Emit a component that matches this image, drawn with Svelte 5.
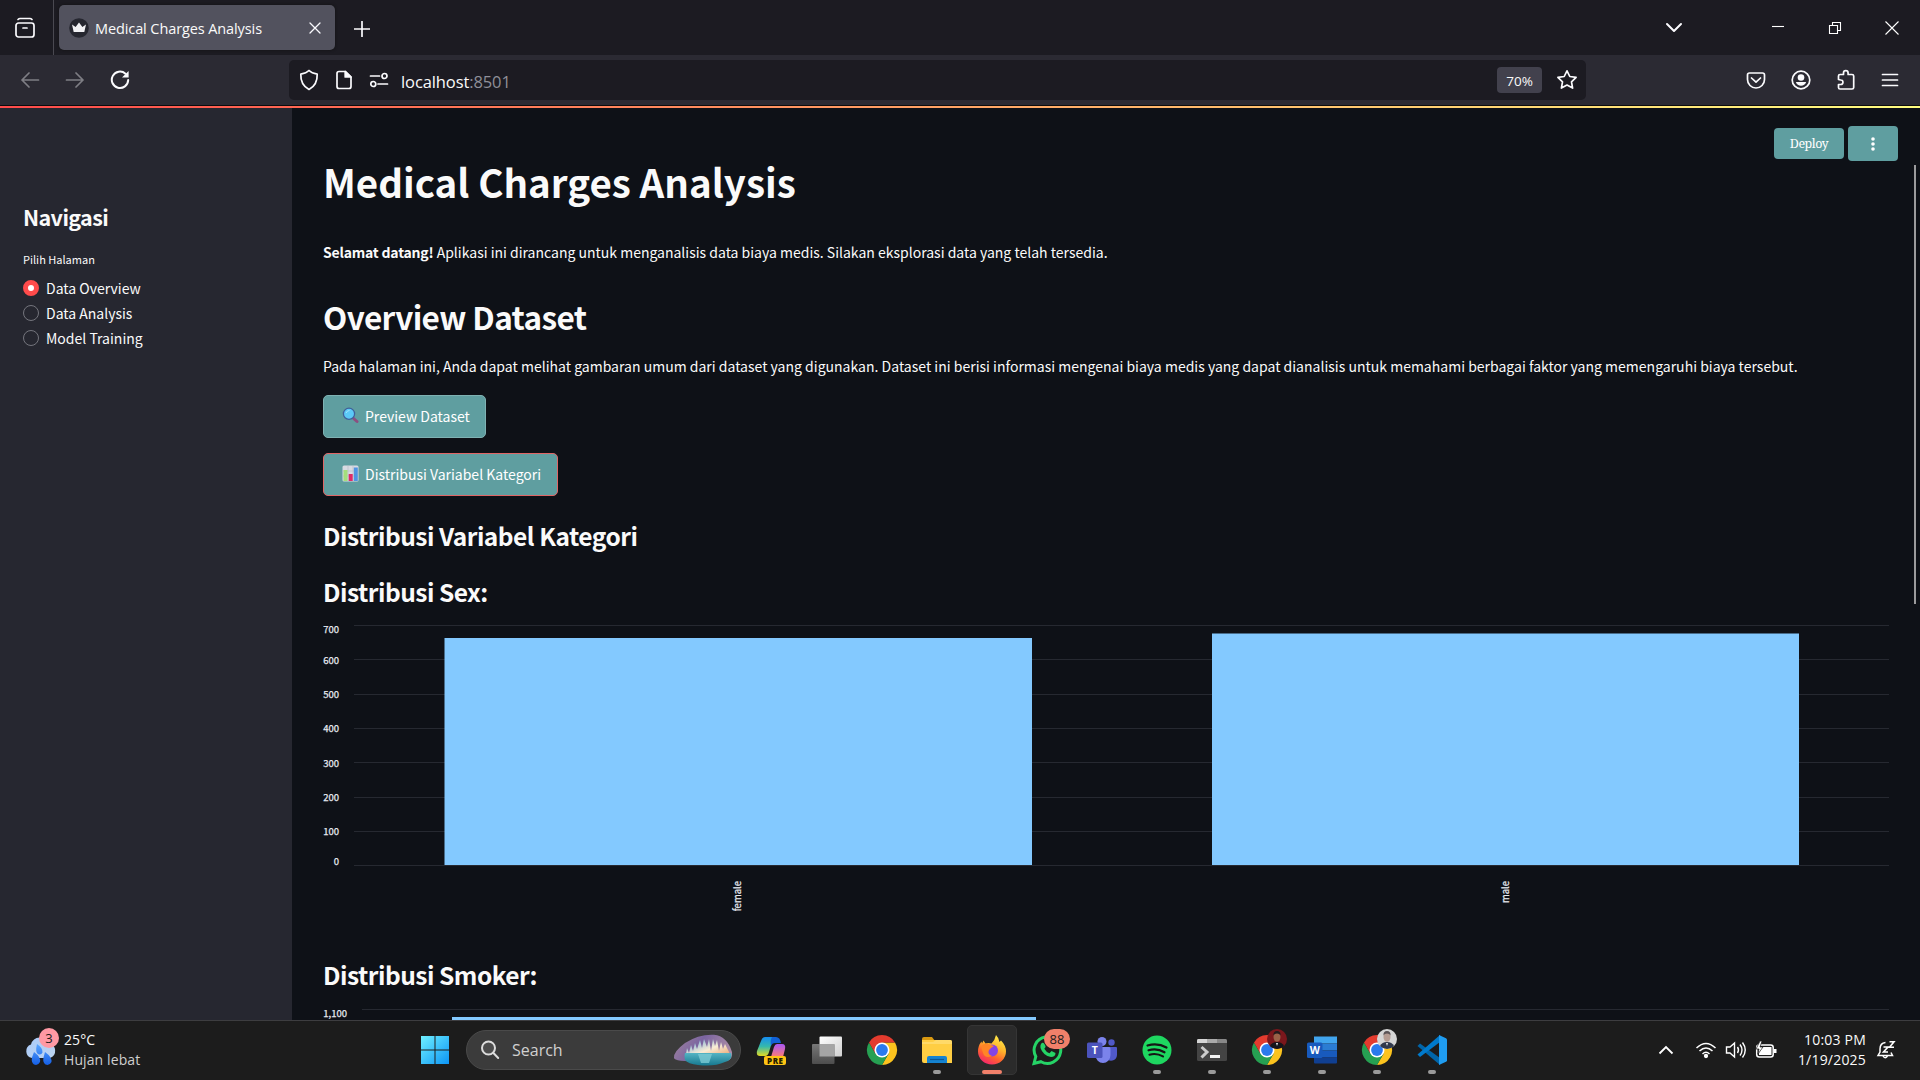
<script>
  const pages = ['Data Overview', 'Data Analysis', 'Model Training'];
  let current = $state('Data Overview');
  const ticks = [700, 600, 500, 400, 300, 200, 100, 0];
  const apps = [
    { name: 'copilot' }, { name: 'taskview' }, { name: 'chrome' },
    { name: 'files', open: true }, { name: 'firefox', active: true },
    { name: 'whatsapp', badge: 88 }, { name: 'teams' },
    { name: 'spotify', open: true }, { name: 'terminal', open: true },
    { name: 'chrome', open: true, avatar: 'red' }, { name: 'word', open: true },
    { name: 'chrome', open: true, avatar: 'gray' }, { name: 'code', open: true }
  ];
</script>

<div class="screen">
  <header class="tabs">
    <div class="view">
      <svg width="22" height="22" viewBox="0 0 22 22" class="line"><path d="M4 2.500Q5 1.500 6 1.500H16Q17 1.500 18 2.500" /><rect x="2" y="6" width="18" height="14" rx="2.500" /><path d="M9 11h4" /></svg>
    </div>
    <div class="tab">
      <svg width="20" height="20" viewBox="0 0 20 20"><circle cx="10" cy="10" r="9.800" fill="#262730" /><path d="M3 6.500l3.600 2.600L10 4.600l3.400 4.500L17 6.500 15.300 14H4.700z" fill="#f2f2f5" /></svg>
      <span class="tab-title">Medical Charges Analysis</span>
      <svg class="line close" width="12" height="12" viewBox="0 0 12 12"><path d="M1 1l10 10M11 1L1 11" /></svg>
    </div>
    <svg class="line plus" width="16" height="16" viewBox="0 0 16 16"><path d="M8 .5v15M.5 8h15" /></svg>
    <div class="window">
      <svg class="line thick chev" width="18" height="12" viewBox="0 0 18 12"><path d="M2 2l7 7 7-7" /></svg>
      <svg class="thin min" width="12" height="14" viewBox="0 0 12 14"><path d="M0 5.500h12" /></svg>
      <svg class="thin restore" width="14" height="14" viewBox="0 0 14 14"><path d="M1.500 4.500h8v8h-8zM4.500 4.500v-3h8v8h-3" /></svg>
      <svg class="thin shut" width="14" height="14" viewBox="0 0 14 14"><path d="M.5.5l13 13M13.500.5l-13 13" /></svg>
    </div>
  </header>

  <div class="toolbar">
    <div class="nav">
      <svg class="line dim" width="20" height="20" viewBox="0 0 20 20"><path d="M18.500 10H2M9 3l-7 7 7 7" /></svg>
      <svg class="line dim" width="20" height="20" viewBox="0 0 20 20"><path d="M1.500 10H18M11 3l7 7-7 7" /></svg>
      <svg class="line thick" width="20" height="20" viewBox="0 0 20 20"><path d="M15.500 3.700A8.200 8.200 0 1 0 18.200 10" /><path d="M18.600 1v6.500H12z" fill="#fbfbfe" stroke="none" /></svg>
    </div>
    <div class="url">
      <svg class="line" width="20" height="22" viewBox="0 0 20 22"><path d="M10 1.500C8 3.500 5 4.600 1.800 5.200 1.500 13 4.500 17.500 10 20.500 15.500 17.500 18.500 13 18.200 5.200 15 4.600 12 3.500 10 1.500z" /></svg>
      <svg class="line doc" width="18" height="20" viewBox="0 0 18 20"><path d="M4 1.500h6.500L16 7v9.500q0 2-2 2H4q-2 0-2-2v-13q0-2 2-2z" /><path d="M10.200 1.500V7H16z" fill="#fbfbfe" /></svg>
      <svg class="line perm" width="20" height="16" viewBox="0 0 20 16"><path d="M1.500 4h9M9 12h9.500" /><circle cx="15.500" cy="4" r="2.500" /><circle cx="4.300" cy="12" r="2.500" /></svg>
      <span class="host">localhost<i>:8501</i></span>
      <span class="zoom">70%</span>
      <svg class="line star" width="22" height="22" viewBox="0 0 22 22"><path d="M11 1.800l2.800 5.700 6.300.9-4.600 4.400 1.100 6.300L11 16.100l-5.600 3 1.100-6.300L1.900 8.400l6.300-.9z" /></svg>
    </div>
    <div class="tools">
      <svg class="line" width="20" height="20" viewBox="0 0 20 20"><path d="M3.500 3h13q2 0 2 2v4.500a8.500 8.500 0 0 1-17 0V5q0-2 2-2zM5.500 8l4.500 4.200L14.500 8" /></svg>
      <svg class="line" width="20" height="20" viewBox="0 0 20 20"><circle cx="10" cy="10" r="8.800" /><circle cx="10" cy="7.500" r="3.300" fill="#fbfbfe" stroke="none" /><path d="M4.800 12h10.400q-1.500 3.800-5.200 3.800T4.800 12z" fill="#fbfbfe" stroke="none" /></svg>
      <svg class="line" width="20" height="22" viewBox="0 0 20 22"><path d="M2.500 10.500V7q0-1.500 1.500-1.500h3.500V4a2.300 2.300 0 0 1 4.600 0v1.500H16q1.700 0 1.700 1.500v11.500q0 1.500-1.700 1.500H4q-1.500 0-1.500-1.500v-3h2.200a2.200 2.200 0 0 0 0-4.500z" /></svg>
      <svg class="line" width="18" height="20" viewBox="0 0 18 20"><path d="M1.500 4.500h15M1.500 10h15M1.500 15.500h15" /></svg>
    </div>
  </div>
  <div class="decoration"></div>

  <div class="app">
    <aside>
      <h3>Navigasi</h3>
      <p class="caption">Pilih Halaman</p>
      {#each pages as page}
        <button class="radio" onclick={() => (current = page)}>
          <span class="dot" class:on={current === page}></span><span>{page}</span>
        </button>
      {/each}
    </aside>
    <main>
      <div class="actions"><button class="deploy">Deploy</button><button class="dots" aria-label="Menu"><svg width="4" height="14" viewBox="0 0 4 14" fill="#fff"><circle cx="2" cy="2" r="1.800" /><circle cx="2" cy="7" r="1.800" /><circle cx="2" cy="12" r="1.800" /></svg></button></div>
      <h1>Medical Charges Analysis</h1>
      <p class="welcome"><b>Selamat datang!</b> Aplikasi ini dirancang untuk menganalisis data biaya medis. Silakan eksplorasi data yang telah tersedia.</p>
      <h2>Overview Dataset</h2>
      <p class="intro">Pada halaman ini, Anda dapat melihat gambaran umum dari dataset yang digunakan. Dataset ini berisi informasi mengenai biaya medis yang dapat dianalisis untuk memahami berbagai faktor yang memengaruhi biaya tersebut.</p>
      <button class="act preview">
        <svg width="17" height="17" viewBox="0 0 17 17"><path d="M10.500 10.500l4.500 4" stroke="#8c4f80" stroke-width="3" stroke-linecap="round" /><circle cx="7" cy="6.800" r="5.600" fill="#5cc9f7" stroke="#40609a" stroke-width="1.300" /><path d="M4 6q1-2.500 3.500-2.500" stroke="#a4e6ff" fill="none" /></svg>
        Preview Dataset
      </button>
      <button class="act selected">
        <svg width="17" height="17" viewBox="0 0 17 17"><rect x=".5" y=".5" width="16" height="16" rx="1.500" fill="#d8dbe2" /><path d="M.5 6h16M.5 11h16M6 .5v16M11 .5v16" stroke="#b7bdc8" stroke-width=".6" /><rect x="1.500" y="5" width="4" height="11" fill="#a3df7c" /><rect x="6.700" y="9" width="4" height="7" fill="#df2b68" /><rect x="11.800" y="2.500" width="4" height="13.500" fill="#4f94e2" /></svg>
        Distribusi Variabel Kategori
      </button>
      <h4>Distribusi Variabel Kategori</h4>
      <h4 class="sex">Distribusi Sex:</h4>
      <svg class="chart" width="1570" height="300" viewBox="320 620 1570 300">
        {#each ticks as t, i}
          <path class="grid" d="M354 {625.5 + Math.round(i * 34.300)}H1889" />
          <text class="tick" x="339" y={i === 0 ? 632.500 : i === 7 ? 864.500 : 629.500 + i * 34.250} text-anchor="end">{t}</text>
        {/each}
        <rect x="444.500" y="638" width="587.500" height="227" />
        <rect x="1212" y="633.500" width="587" height="231.500" />
        <text class="cat" transform="translate(740.500 881) rotate(-90)" text-anchor="end">female</text>
        <text class="cat" transform="translate(1508.500 881) rotate(-90)" text-anchor="end">male</text>
      </svg>
      <h4 class="smoker">Distribusi Smoker:</h4>
      <svg class="chart next" width="1570" height="20" viewBox="320 1000 1570 20">
        <path class="grid" d="M362 1009.500H1889" /><text class="tick" x="347" y="1016.500" text-anchor="end">1,100</text>
        <rect x="452" y="1017" width="584" height="3" />
      </svg>
      <div class="scroll"></div>
    </main>
  </div>

  <footer>
    <div class="weather">
      <svg width="34" height="38" viewBox="0 0 34 38">
        <defs><linearGradient id="cloud" x2="1" y2="1"><stop stop-color="#a9cbfa" /><stop offset="1" stop-color="#bdd4ef" /></linearGradient><linearGradient id="drop" x2="0" y2="1"><stop stop-color="#5aa6ff" /><stop offset="1" stop-color="#155fe6" /></linearGradient></defs>
        <path d="M8 27a7 7 0 0 1-1-13.500 9.500 9.500 0 0 1 18-1A7.500 7.500 0 0 1 26 27z" fill="url(#cloud)" />
        <path d="M13 13q6 4 5.500 8.500-1.500 3-4.500 1.500-3-2-1-10zM10 21q7 5 6 10-2 4-6 2.500-3-2-2-7zM21 21q7 5 6.500 10-2 4-6 2.500-3-2-2-7z" fill="url(#drop)" />
      </svg>
      <span class="alert">3</span>
      <div class="temp"><span>25°C</span><span class="muted">Hujan lebat</span></div>
    </div>
    <svg class="start" width="30" height="30" viewBox="0 0 30 30"><defs><linearGradient id="win" x2="1" y2="1"><stop stop-color="#6ff0ff" /><stop offset="1" stop-color="#0c95f5" /></linearGradient></defs><path d="M1 1h13.500v13.500H1zM15.500 1H29v13.500H15.500zM1 15.500h13.500V29H1zM15.500 15.500H29V29H15.500z" fill="url(#win)" /></svg>
    <div class="search">
      <svg width="20" height="20" viewBox="0 0 20 20" fill="#4c4c4c" stroke="#dcdcdc" stroke-width="2" stroke-linecap="round"><circle cx="8.500" cy="8" r="6.500" /><path d="M13.200 12.800l5 5.200" /></svg>
      <span>Search</span>
      <svg class="cave" width="60" height="32" viewBox="0 0 60 32">
        <defs><linearGradient id="cv" x2="1" y2=".3"><stop stop-color="#a3869f" /><stop offset=".5" stop-color="#7a64a0" /><stop offset="1" stop-color="#a98aa5" /></linearGradient><linearGradient id="sky" x2="1" y2="1"><stop stop-color="#5fa0d8" /><stop offset=".55" stop-color="#f8ecd5" /><stop offset="1" stop-color="#e89a61" /></linearGradient><linearGradient id="sea" x2="0" y2="1"><stop stop-color="#54b4c4" /><stop offset="1" stop-color="#16788f" /></linearGradient></defs>
        <path d="M1 24Q0 18 12 9 26 0 41 .8 54 2 59 18 60 25 54 27 1 29 1 24z" fill="url(#cv)" />
        <path d="M13 20l1-6 2 5 2-8 2 6 2-8 2 6 3-9 2 8 2-9 3 8 2-8 2 12 2-12 2 7 2-6 2 11 2-9 2 7 2-5 4 8 2 5H12z" fill="url(#sky)" />
        <path d="M12 19h46q2 7-6 9-11 5-27 3-10-1-13-5-1-4 0-7z" fill="url(#sea)" />
        <path d="M25 20h14l-3 9h-8z" fill="#7ccbd5" opacity=".8" />
      </svg>
    </div>
    <div class="apps">
      {#each apps as app}
        <div class="cell" class:active={app.active}>
          <svg width="32" height="32" viewBox="0 0 32 32">
            {#if app.name === 'copilot'}
              <defs><linearGradient id="cpa" x2="0" y2="1"><stop stop-color="#168df0" /><stop offset=".5" stop-color="#35b9ac" /><stop offset="1" stop-color="#e5dc20" /></linearGradient><linearGradient id="cpb" x2="0" y2="1"><stop stop-color="#a957f7" /><stop offset="1" stop-color="#ff7d70" /></linearGradient></defs>
              <path d="M9 3h11q-3 1-4 5l-3 10q-1 4-4 4H4q-4 0-3-5L5 7q1-4 4-4z" fill="url(#cpa)" /><path d="M16 3h4q4 0 5 6h-6q-3 0-4 3-1-6 1-9z" fill="#1261d6" /><path d="M21 10h5q4 0 3 5l-2 8H15l3-10q1-3 3-3z" fill="url(#cpb)" />
              <rect x="8" y="22" width="22" height="9" rx="2" fill="#ffc414" /><text x="19.300" y="29.500" class="pre">PRE</text>
            {:else if app.name === 'taskview'}
              <defs><linearGradient id="tva" x2="1" y2="1"><stop stop-color="#fff" /><stop offset="1" stop-color="#d0d0d0" /></linearGradient><linearGradient id="tvb" x2="0" y2="1"><stop stop-color="#777" /><stop offset="1" stop-color="#4d4d4d" /></linearGradient></defs>
              <rect x="8.500" y="2.500" width="22.500" height="20" rx="1" fill="url(#tva)" /><rect x="1" y="10" width="22.500" height="20" rx="1" fill="url(#tvb)" /><path d="M8.500 10h15v12.500h-15z" fill="#a5a5a5" />
            {:else if app.name === 'chrome'}
              <path d="M16 8.500h13A15 15 0 0 1 16 31l6.500-11.300z" fill="#fcc31e" /><path d="M3 8.500A15 15 0 0 0 16 31l6.500-11.300L9.500 19.700z" fill="#26a052" /><path d="M3 8.500a15 15 0 0 1 26 0H16L9.500 19.700z" fill="#e33b2e" /><circle cx="16" cy="16" r="7.500" fill="#fff" /><circle cx="16" cy="16" r="5.900" fill="#2a7aed" />
            {:else if app.name === 'files'}
              <path d="M1 5q0-2 2-2h8l3 4H1z" fill="#d99911" /><path d="M1 6h28q2 0 2 2v21H3q-2 0-2-2z" fill="#ffce43" /><path d="M1 8h11l3-2h14q2 0 2 2v2H1z" fill="#ffda69" /><path d="M6 29v-5q0-2 2-2h16q2 0 2 2v5z" fill="#1583d1" /><path d="M9 25.500h14" stroke="#0c5795" stroke-width="1.200" />
            {:else if app.name === 'firefox'}
              <defs><linearGradient id="ff" x1=".8" y1="0" x2=".3" y2="1"><stop stop-color="#fff24d" /><stop offset=".4" stop-color="#ffb52b" /><stop offset=".7" stop-color="#ff632d" /><stop offset="1" stop-color="#f3256f" /></linearGradient></defs>
              <path d="M20 1q3 3 3.500 7l1.500-1.500q5 5 5 11a14 13 0 0 1-28 0q0-6 3.500-10l.5 2 1.500-3 2 3q3-1 6 0Q19 6 20 1z" fill="url(#ff)" /><circle cx="16" cy="16.500" r="6" fill="#8444e5" /><path d="M6 11q5-3 9 0l3 1-3 2-2 2q-2 4 3 6-7 3-9-3-2-4-1-8z" fill="#ff8526" />
            {:else if app.name === 'whatsapp'}
              <path d="M3 29.500l1.800-7A13.300 13.300 0 1 1 10 27.700z" fill="none" stroke="#25d366" stroke-width="3" /><path d="M10 10q2-3 4 1l.6 1.500q0 1-1.300 2.200 2 3.500 5.200 4.500l2-2.200 4 2q0 4-4.500 4Q12 21.500 9.500 14 9 11.500 10 10z" fill="#25d366" />
            {:else if app.name === 'teams'}
              <circle cx="16" cy="7.500" r="4.500" fill="#7b83eb" /><circle cx="25.500" cy="8.500" r="3.200" fill="#5059c9" /><path d="M21 13h9q1 0 1 1v7a6 6 0 0 1-9 5z" fill="#5059c9" /><path d="M10 13h13q1.500 0 1.500 1.500V21a7.500 8 0 0 1-15 0z" fill="#7b83eb" /><rect x="1" y="8.500" width="15.500" height="15.500" rx="1.500" fill="#4b53bc" /><text x="8.800" y="20" class="letter">T</text>
            {:else if app.name === 'spotify'}
              <circle cx="16" cy="16" r="14.500" fill="#1ed760" /><path d="M6.500 11.500q10-3 19 2M7.500 16.300q8.500-2.500 16 2M8.500 20.700q7-2 13.500 1.700" fill="none" stroke="#151515" stroke-width="2.200" stroke-linecap="round" />
            {:else if app.name === 'terminal'}
              <rect x="1" y="5" width="30" height="22" rx="1.500" fill="#444" /><path d="M2.500 5h27q1.500 0 1.500 1.500V9H1V6.500Q1 5 2.500 5z" fill="#888" /><path d="M2.500 5H11v4H1V6.500Q1 5 2.500 5z" fill="#d5d5d5" /><path d="M11 5h10v4H11z" fill="#aaa" /><path d="M5.500 13l5.500 5-5.500 5.500" fill="none" stroke="#ccc" stroke-width="3" /><path d="M14 22.500h10" stroke="#f4f4f4" stroke-width="3" />
            {:else if app.name === 'word'}
              <path d="M8 2.500h23v7H8z" fill="#41a5ee" /><path d="M8 9.500h23v7H8z" fill="#2b7cd3" /><path d="M8 16.500h23v7H8z" fill="#185abd" /><path d="M8 23.500h23v5q0 1-1 1H9q-1 0-1-1z" fill="#103f91" /><rect x="1" y="8.500" width="15.500" height="15.500" rx="1.500" fill="#185abd" /><text x="8.800" y="20" class="letter">W</text>
            {:else}
              <path d="M1.500 12L4 9.500 24 24v7z" fill="#0065a9" /><path d="M1.500 20.500L4 23 24 8V1z" fill="#007acc" /><path d="M23 1l7 3.200q1 .5 1 1.500v20.600q0 1-1 1.500L23 31z" fill="#1f9cf0" />
            {/if}
          </svg>
          {#if app.avatar}
            <svg class="avatar" width="20" height="20" viewBox="0 0 20 20">
              <circle cx="10" cy="10" r="10" fill={app.avatar === 'red' ? '#7b171c' : '#d5d5d5'} /><path d="M3 17q2-4 7-4t7 4q-3 3-7 3t-7-3z" fill={app.avatar === 'red' ? '#15151c' : '#30394c'} /><ellipse cx="10" cy="8" rx="3.500" ry="4.800" fill={app.avatar === 'red' ? '#9a6248' : '#b59c92'} /><path d="M6.500 6.500q-.5-4.500 3.500-4.500t3.500 4.500q-1-2-3.500-2T6.500 6.500z" fill={app.avatar === 'red' ? '#241b1c' : '#5a5355'} /><path d="M9 14l1 3 1-3z" fill="#eee" />
            </svg>
          {/if}
          {#if app.badge}<span class="badge">{app.badge}</span>{/if}
          {#if app.open || app.active}<span class="run"></span>{/if}
        </div>
      {/each}
    </div>
    <div class="tray">
      <svg class="up" width="16" height="12" viewBox="0 0 16 12"><path d="M1.500 9.500L8 3l6.500 6.500" fill="none" stroke="#fff" stroke-width="1.800" /></svg>
      <svg width="22" height="18" viewBox="0 0 22 18" fill="none" stroke="#fff" stroke-width="1.500"><path d="M1.500 7q9.500-9 19 0M4.500 10q6.500-6 13 0M7.500 13q3.500-3.500 7 0" /><circle cx="11" cy="15" r="1.400" fill="#fff" /></svg>
      <svg width="22" height="18" viewBox="0 0 22 18" fill="none" stroke="#fff" stroke-width="1.400"><path d="M1.500 6h3.500l4.500-4v14L5 12H1.500z" /><path d="M12.500 6q2 3 0 6M15 3.500q4 5.500 0 11" /><path d="M17.500 1.500q5.500 7.500 0 15" /></svg>
      <svg width="22" height="18" viewBox="0 0 22 18"><rect x="1.700" y="4" width="16.500" height="12" rx="2.500" fill="none" stroke="#fff" stroke-width="1.500" /><path d="M4 14V10l4-4h8.500v8zM19 8h2.500v4H19z" fill="#fff" /><path d="M5 0L1 8h3l-1 5 5-7H5l2-6z" fill="#fff" stroke="#1c1c1c" stroke-width=".7" /></svg>
      <div class="clock"><span>10:03 PM</span><span>1/19/2025</span></div>
      <svg class="bell" width="20" height="20" viewBox="0 0 20 20" fill="none" stroke="#fff" stroke-width="1.500"><path d="M9.500 2.500Q4 3 4 9v3L2 15.500h14.500L15 12.500" /><path d="M7 16q2 3.500 4.500 0" /><path d="M7.500 7h4.500l-4.500 5H12M13.500 1.700h4.500l-4.500 5.600H18" stroke-width="1.600" /></svg>
    </div>
  </footer>
</div>

<style>
  :global(body) { margin: 0; overflow: hidden; background: #0e1117; }
  * { box-sizing: border-box; }
  svg { display: block; flex: none; }
  button { border: 0; padding: 0; color: inherit; background: none; font: inherit; }
  .screen { width: 1920px; height: 1080px; display: flex; flex-direction: column; overflow: hidden; color: #fafafa; font-family: "Noto Sans CJK SC", sans-serif; white-space: nowrap; }
  .line { fill: none; stroke: #fbfbfe; stroke-width: 1.700; stroke-linecap: round; stroke-linejoin: round; }
  .thick { stroke-width: 2; }
  .thin { fill: none; stroke: #fff; stroke-width: 1.100; }
  .dim { opacity: .4; }
  .tabs { height: 55px; background: #1c1b22; display: flex; align-items: center; font-family: "Open Sans", sans-serif; }
  .view { width: 54px; height: 55px; border-right: 1px solid #4a4951; padding: 17px 0 0 14px; }
  .tab { margin-left: 5px; width: 276px; height: 45px; border-radius: 5px; background: #52525e; display: flex; align-items: center; padding: 0 14px 0 10px; box-shadow: 0 0 3px #111; }
  .tab-title { margin-left: 6px; padding-top: 2px; font-size: 14.500px; letter-spacing: -.1px; flex: 1; }
  .close { stroke-width: 1.300; }
  .plus { margin-left: 19px; margin-top: 2px; }
  .window { margin-left: auto; display: flex; align-items: center; padding-right: 21px; }
  .chev { margin-right: 89px; }
  .min { margin-right: 44px; }
  .restore { margin-right: 43px; }
  .toolbar { height: 50px; background: #2b2a33; display: flex; align-items: center; font-family: "Open Sans", sans-serif; }
  .nav { width: 289px; display: flex; gap: 25px; padding-left: 20px; }
  .url { width: 1297px; height: 40px; border-radius: 5px; background: #1c1b22; display: flex; align-items: center; padding: 0 8px 0 10px; }
  .doc { margin-left: 16px; }
  .perm { margin-left: 16px; }
  .host { margin-left: 12px; padding-top: 2px; font-size: 16.500px; letter-spacing: -.1px; flex: 1; }
  .host i { font-style: normal; color: #8f8f98; }
  .zoom { width: 45px; height: 26px; border-radius: 4px; background: #42414d; display: grid; place-items: center; padding-top: 1px; font-size: 13.500px; letter-spacing: 0; }
  .star { margin-left: 14px; }
  .tools { margin-left: auto; display: flex; align-items: center; gap: 25px; padding-right: 21px; }
  .decoration { height: 3px; border-top: 1px solid #0c0c0d; background: linear-gradient(90deg, #ff4b4b, #fffd80); }
  .app { height: 912px; display: flex; }
  aside { width: 292px; background: #262730; padding: 92px 0 0 23px; }
  h1, h2, h3, h4, p { margin: 0; }
  h3 { font-size: 21.500px; line-height: 34px; font-weight: 600; letter-spacing: -.6px; }
  .caption { font-size: 11px; line-height: 18px; margin: 16px 0 7px; }
  .radio { display: flex; align-items: center; gap: 7px; height: 25px; font-size: 14px; }
  .dot { width: 16px; height: 16px; border-radius: 50%; border: 1px solid #74757d; }
  .dot.on { border: 5px solid #ff4b4b; background: #fff; }
  main { position: relative; width: 1628px; padding: 45px 0 0 31px; background: #0e1117; overflow: hidden; }
  .actions { position: absolute; right: 22px; top: 18px; display: flex; align-items: center; gap: 4px; }
  .actions button { display: grid; place-items: center; background: #5f9ea0; border-radius: 4px; }
  .actions .deploy { width: 70px; height: 31px; padding-bottom: 1px; font: 12.500px "Noto Serif", "Liberation Serif", serif; letter-spacing: -.5px; color: #fff; }
  .actions .dots { width: 50px; height: 35px; }
  h1 { font-size: 38.500px; line-height: 56px; height: 56px; font-weight: 700; }
  .welcome, .intro { font-size: 14px; line-height: 22px; }
  .welcome { margin-top: 32px; }
  .welcome b { letter-spacing: -.2px; }
  h2 { margin-top: 31px; font-size: 31.500px; line-height: 44px; font-weight: 600; letter-spacing: -.62px; }
  .intro { margin-top: 17px; letter-spacing: .01px; }
  .act { display: flex; align-items: center; gap: 6px; height: 43px; background: #5f9ea0; border: 1px solid #7fb2b3; border-radius: 5px; font-size: 14px; color: #fff; padding: 0 0 2px 18px; }
  .preview { width: 163px; margin-top: 18px; }
  .selected { width: 235px; margin-top: 15px; border-color: #df6666; }
  h4 { font-size: 24.500px; line-height: 36px; font-weight: 600; margin-top: 22px; letter-spacing: -.5px; }
  h4.sex { margin-top: 20px; }
  .chart { margin: 10px 0 0 -3px; }
  .chart rect { fill: #83c9ff; }
  .grid { stroke: #262931; stroke-width: 1; }
  .tick, .cat { font-size: 9.500px; fill: #e6eaf1; stroke: #e6eaf1; stroke-width: .25; }
  h4.smoker { margin-top: 37px; }
  .next { margin-top: 7px; }
  .scroll { position: absolute; right: 4px; top: 57px; width: 2px; height: 439px; background: #9b9b9d; }
  footer { height: 60px; border-top: 1px solid #3d3d40; background: #1c1c1c; display: flex; align-items: center; padding-bottom: 2px; font-family: "Open Sans", sans-serif; }
  .weather { position: relative; width: 420px; display: flex; align-items: center; padding-left: 24px; }
  .alert { position: absolute; left: 39px; top: -2px; width: 20px; height: 20px; border-radius: 50%; background: #ff99a4; color: #1c1c1c; display: grid; place-items: center; font-size: 13px; }
  .temp { display: grid; margin-left: 6px; font-size: 14px; line-height: 20px; letter-spacing: .1px; }
  .muted { color: #cfcfcf; }
  .search { margin-left: 16px; width: 275px; height: 40px; border-radius: 20px; border: 1px solid #4a4a4a; background: #3b3b3b; display: flex; align-items: center; padding: 0 7px 0 13px; }
  .search span { margin-left: 12px; font-size: 16px; color: #d0d0d0; flex: 1; letter-spacing: 0; }
  .apps { display: flex; margin-left: 3px; }
  .cell { position: relative; width: 55px; height: 50px; display: grid; place-items: center; }
  .active { width: 50px; margin: 0 2.500px; background: #2b2b2b; border: 1px solid #353535; border-radius: 5px; }
  .run { position: absolute; left: 50%; bottom: 1px; width: 8px; height: 4px; margin-left: -4px; border-radius: 2px; background: #9a9a9a; }
  .active .run { width: 20px; margin-left: -10px; bottom: 0; background: #f0806a; }
  .badge { position: absolute; left: 25px; top: 4px; width: 26px; height: 20px; border-radius: 10px; background: #f0806a; color: #1c1c1c; display: grid; place-items: center; font-size: 13px; }
  .avatar { position: absolute; left: 28px; top: 4px; }
  .pre { font: 800 8px "Open Sans", sans-serif; text-anchor: middle; fill: #251c00; letter-spacing: .5px; }
  .letter { font: 700 10.500px "Open Sans", sans-serif; text-anchor: middle; fill: #fff; }
  .tray { margin-left: auto; display: flex; align-items: center; gap: 8px; padding-right: 24px; }
  .up { margin-right: 13px; }
  .clock { width: 81px; display: grid; justify-items: end; font-size: 14px; line-height: 20px; letter-spacing: .2px; }
  .bell { margin-left: 2px; }
</style>
